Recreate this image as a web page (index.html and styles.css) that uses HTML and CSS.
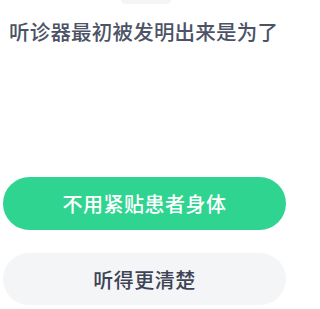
FILE: index.html
```html
<!DOCTYPE html>
<html lang="zh">
<head>
<meta charset="utf-8">
<link rel="stylesheet" href="styles.css">
</head>
<body>
<div class="page">
  <div class="shade"></div>
  <h1 class="question">听诊器最初被发明出来是为了</h1>
  <div class="options">
    <div class="option option-correct">不用紧贴患者身体</div>
    <div class="option option-plain">听得更清楚</div>
  </div>
</div>
</body>
</html>
```
FILE: styles.css
```css
html, body {
  margin: 0;
  padding: 0;
  background: #ffffff;
}
.page {
  width: 294px;
  height: 309px;
  padding: 0 8px 0 3px;
  box-sizing: border-box;
  font-family: "Noto Sans CJK SC", "Noto Sans", sans-serif;
  overflow: hidden;
}
.shade {
  width: 50px;
  height: 4px;
  margin-left: 118px;
  border-radius: 0 0 25px 25px;
  background: #f5f5f7;
}
.question {
  margin: 13px 0 0 6px;
  font-size: 20.5px;
  line-height: 28px;
  font-weight: 500;
  letter-spacing: 0.2px;
  color: #4c5366;
  white-space: nowrap;
}
.options {
  margin-top: 132px;
  display: flex;
  flex-direction: column;
  gap: 23px;
}
.option {
  height: 53px;
  border-radius: 27px;
  display: flex;
  align-items: center;
  justify-content: center;
  font-size: 20px;
  font-weight: 500;
  letter-spacing: 0.5px;
}
.option-correct {
  background: #2fd490;
  color: #ffffff;
}
.option-plain {
  height: 52px;
  background: #f4f5f7;
  color: #3e4455;
}
```
